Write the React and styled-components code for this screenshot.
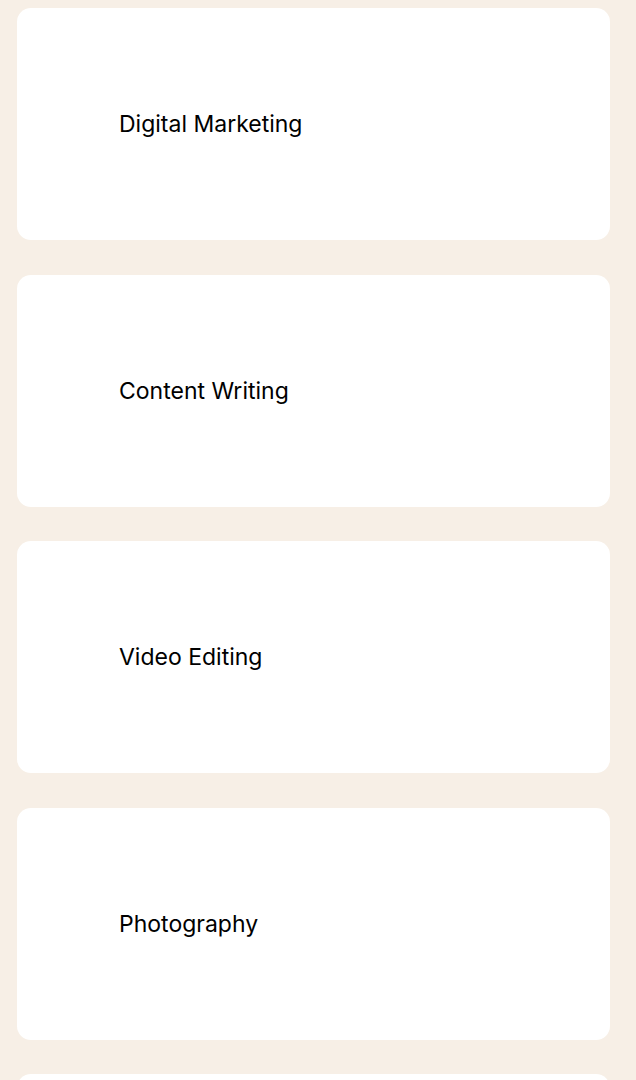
import React from 'react';
import styled, { createGlobalStyle } from 'styled-components';

const GlobalStyle = createGlobalStyle`
  html, body {
    margin: 0;
    padding: 0;
    background: #f7efe6;
    font-family: Inter, "Noto Sans", sans-serif;
  }
`;

const List = styled.div`
  display: flex;
  flex-direction: column;
  gap: 34.5px;
  padding: 8px 26px 8px 17px;
`;

const Card = styled.div`
  display: flex;
  align-items: center;
  height: 232px;
  padding-left: 102px;
  background: #fff;
  border-radius: 14px;
  font-size: 23px;
  font-weight: 400;
  color: #000;
`;

const services = [
  'Digital Marketing',
  'Content Writing',
  'Video Editing',
  'Photography',
  'Graphic Design',
];

const App = () => {
  return (
    <>
      <GlobalStyle />
      <List>
        {services.map((s) => (
          <Card key={s}>{s}</Card>
        ))}
      </List>
    </>
  );
};

export default App;
